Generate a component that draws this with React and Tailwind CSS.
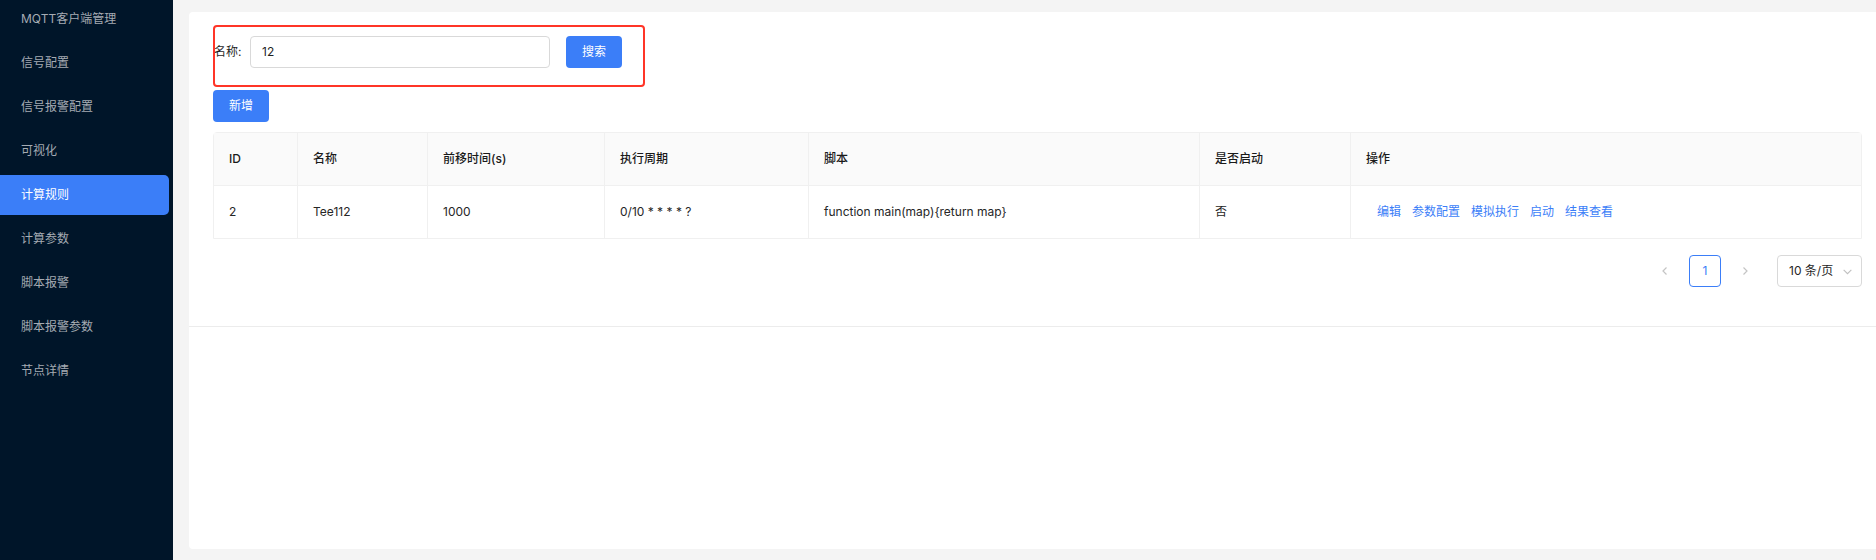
import React from "react";

const menu = ["MQTT客户端管理", "信号配置", "信号报警配置", "可视化", "计算规则", "计算参数", "脚本报警", "脚本报警参数", "节点详情"];

const cols = [
  { t: "ID", w: "w-[84px]" },
  { t: "名称", w: "w-[130px]" },
  { t: "前移时间(s)", w: "w-[177px]" },
  { t: "执行周期", w: "w-[204px]" },
  { t: "脚本", w: "w-[391px]" },
  { t: "是否启动", w: "w-[151px]" },
  { t: "操作", w: "flex-1" },
];

const row = ["2", "Tee112", "1000", "0/10 * * * * ?", "function main(map){return map}", "否"];

export default function App() {
  return (
    <div className="flex w-[1876px] h-[560px] overflow-hidden text-[12px] text-[#1f1f1f]" style={{ fontFamily: 'Inter, "Noto Sans CJK SC", sans-serif' }}>
      <aside className="w-[173px] shrink-0 bg-[#001529] pr-[4px]">
        <ul className="flex flex-col -mt-[1px]">
          {menu.map((m) => (
            <li
              key={m}
              className={
                "h-[40px] mb-[4px] flex items-center pl-[21px] rounded-r-[5px] " +
                (m === "计算规则" ? "bg-[#3b7ef8] text-white" : "text-[#a5abb3]")
              }
            >
              {m}
            </li>
          ))}
        </ul>
      </aside>
      <main className="flex-1 bg-[#f4f4f4] pl-[16px] pt-[12px] pb-[11px] flex flex-col">
        <section className="bg-white rounded-tl-[4px] border-b border-[#ececec] h-[315px] pl-[24px] pr-[14px] pt-[13px] shrink-0">
          <div className="w-[432px] h-[62px] border-2 border-[#ff3527] rounded-[4px] flex items-center pb-[16px]">
            <div className="flex items-center pt-[8px]">
              <span className="ml-[-1px] w-[36px]">名称:</span>
              <div className="w-[300px] h-[32px] border border-[#d9d9d9] rounded-[4px] flex items-center pl-[11px] text-[12px]">12</div>
              <button className="ml-[16px] w-[56px] h-[32px] rounded-[4px] bg-[#3b7ef8] text-white">搜索</button>
            </div>
          </div>
          <button className="mt-[3px] w-[56px] h-[32px] rounded-[4px] bg-[#3b7ef8] text-white">新增</button>
          <div className="mt-[10px] border border-[#f0f0f0] rounded-t-[4px]">
            <div className="flex h-[53px] bg-[#fafafa] border-b border-[#f0f0f0] font-medium text-[#1a1a1a]">
              {cols.map((c, i) => (
                <div key={c.t} className={c.w + " flex items-center pl-[15px] " + (i < cols.length - 1 ? "border-r border-[#f0f0f0]" : "")}>
                  {c.t}
                </div>
              ))}
            </div>
            <div className="flex h-[52px] text-[#262626]">
              {row.map((v, i) => (
                <div key={i} className={cols[i].w + " flex items-center pl-[15px] border-r border-[#f0f0f0]"}>
                  {v}
                </div>
              ))}
              <div className="flex-1 flex items-center pl-[26px] gap-[11px] text-[#3b7ef8]">
                <span>编辑</span>
                <span>参数配置</span>
                <span>模拟执行</span>
                <span>启动</span>
                <span>结果查看</span>
              </div>
            </div>
          </div>
          <div className="mt-[16px] flex justify-end items-center">
            <span className="w-[32px] h-[32px] flex items-center justify-center text-[#c4c4c4]">
              <svg width="10" height="10" viewBox="0 0 10 10" fill="none" stroke="currentColor" strokeWidth="1.2"><path d="M6.5 1.5 3 5l3.5 3.5" /></svg>
            </span>
            <span className="ml-[8px] w-[32px] h-[32px] flex items-center justify-center border border-[#3b7ef8] rounded-[4px] text-[#3b7ef8]">1</span>
            <span className="ml-[8px] w-[32px] h-[32px] flex items-center justify-center text-[#c4c4c4]">
              <svg width="10" height="10" viewBox="0 0 10 10" fill="none" stroke="currentColor" strokeWidth="1.2"><path d="M3.5 1.5 7 5 3.5 8.5" /></svg>
            </span>
            <div className="ml-[16px] w-[85px] h-[32px] border border-[#d9d9d9] rounded-[4px] flex items-center justify-between pl-[11px] pr-[8px] text-[#262626]">
              <span>10 条/页</span>
              <svg width="11" height="11" viewBox="0 0 10 10" fill="none" stroke="#bfbfbf" strokeWidth="1"><path d="M1.5 3.5 5 7l3.5-3.5" /></svg>
            </div>
          </div>
        </section>
        <section className="bg-white flex-1 rounded-bl-[4px]"></section>
      </main>
    </div>
  );
}
